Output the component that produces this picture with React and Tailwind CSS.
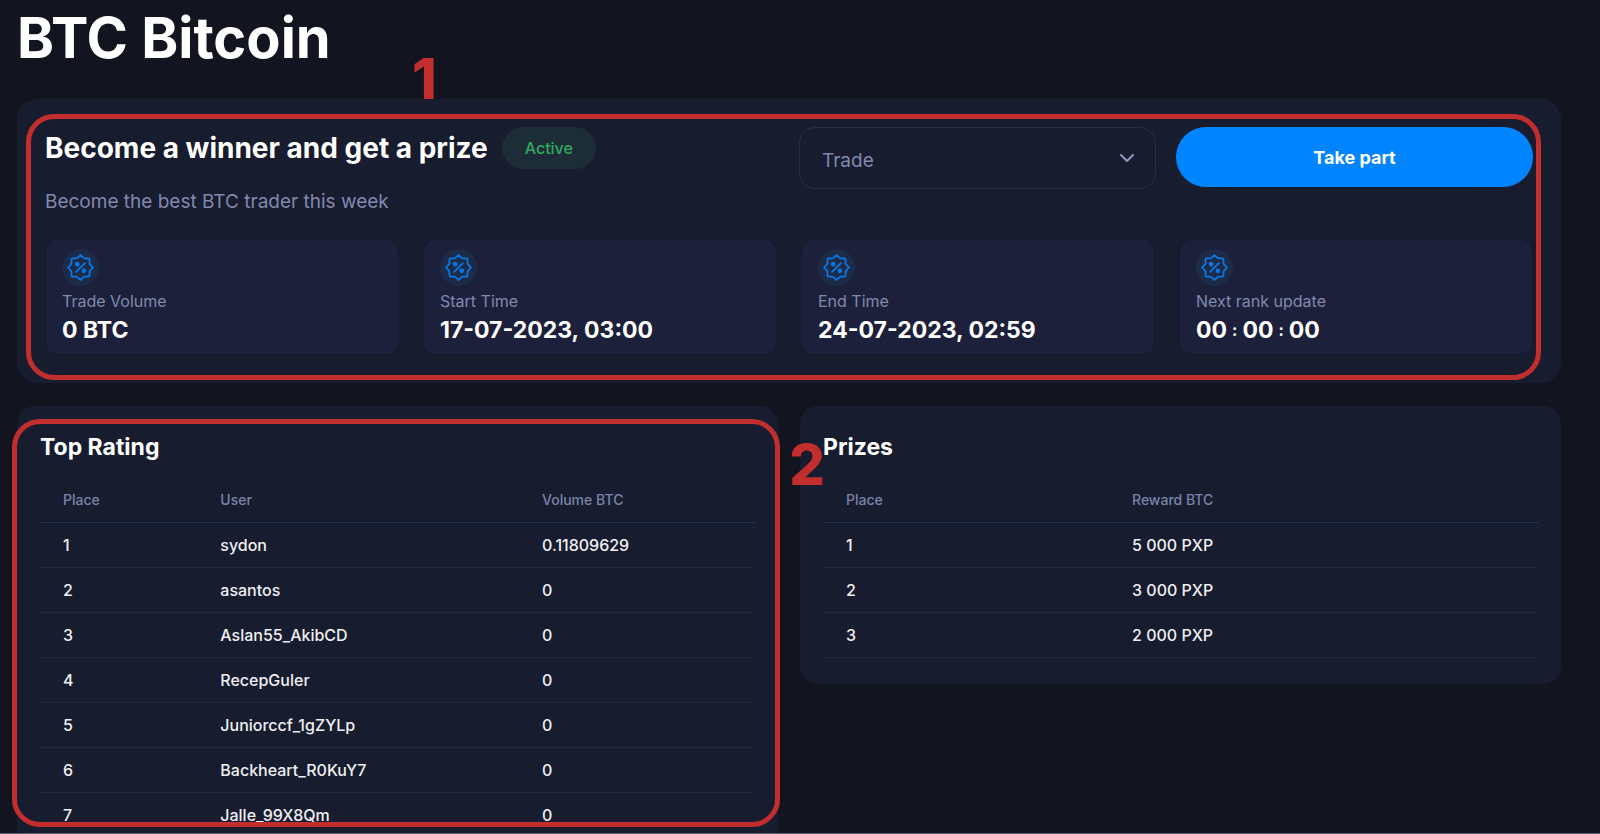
import { ChevronDown } from "lucide-react";

const stats = [
  { label: "Trade Volume", value: "0 BTC" },
  { label: "Start Time", value: "17-07-2023, 03:00" },
  { label: "End Time", value: "24-07-2023, 02:59" },
];

const rating = [
  { place: 1, user: "sydon", volume: "0.11809629" },
  { place: 2, user: "asantos", volume: "0" },
  { place: 3, user: "Aslan55_AkibCD", volume: "0" },
  { place: 4, user: "RecepGuler", volume: "0" },
  { place: 5, user: "Juniorccf_1gZYLp", volume: "0" },
  { place: 6, user: "Backheart_R0KuY7", volume: "0" },
  { place: 7, user: "Jalle_99X8Qm", volume: "0" },
];

const prizes = [
  { place: 1, reward: "5 000 PXP" },
  { place: 2, reward: "3 000 PXP" },
  { place: 3, reward: "2 000 PXP" },
];

function PercentBadge() {
  return (
    <div className="w-[37px] h-[37px] rounded-full bg-[#1c2c48] flex items-center justify-center">
      <svg
        width="27"
        height="27"
        viewBox="0 0 26 26"
        fill="none"
        stroke="#0a78e6"
        strokeWidth="1.7"
        strokeLinecap="round"
        strokeLinejoin="round"
        aria-hidden="true"
      >
        <path d="M13 1 L16 3.8 Q16.6 4.3 17.3 4.3 H20.7 Q21.7 4.3 21.7 5.3 V8.7 Q21.7 9.4 22.2 10 L25 13 L22.2 16 Q21.7 16.6 21.7 17.3 V20.7 Q21.7 21.7 20.7 21.7 H17.3 Q16.6 21.7 16 22.2 L13 25 L10 22.2 Q9.4 21.7 8.7 21.7 H5.3 Q4.3 21.7 4.3 20.7 V17.3 Q4.3 16.6 3.8 16 L1 13 L3.8 10 Q4.3 9.4 4.3 8.7 V5.3 Q4.3 4.3 5.3 4.3 H8.7 Q9.4 4.3 10 3.8 Z" />
        <path d="M17.2 8.8 L8.8 17.2" />
        <circle cx="9.8" cy="9.8" r="1.4" fill="#0a66c8" />
        <circle cx="16.2" cy="16.2" r="1.4" fill="#0a66c8" />
      </svg>
    </div>
  );
}

function StatCard({ label, children }) {
  return (
    <div className="rounded-xl border border-[#161929] bg-[#1c203a] px-4 pt-[9px] pb-[9px]">
      <PercentBadge />
      <div className="mt-px text-base leading-7 text-[#8189ad]">{label}</div>
      <div className="text-[23px] leading-[30px] font-bold text-white">{children}</div>
    </div>
  );
}

function HeadCell({ className = "", children }) {
  return (
    <th
      scope="col"
      className={`h-[46px] px-[23px] text-left text-sm font-medium text-[#7a83a9] border-b border-[#1f3150] ${className}`}
    >
      {children}
    </th>
  );
}

function Cell({ children }) {
  return (
    <td className="h-[45px] px-[23px] text-base font-medium text-[#eeeff3] border-b border-[#1b2740]">
      {children}
    </td>
  );
}

export default function App() {
  return (
    <main className="h-screen overflow-hidden flex flex-col border-b border-[#5a5c6b] bg-[#12141f] pl-[17px] pr-[39px] font-['Inter',sans-serif] text-white">
      <h1 className="pt-2 text-[56px] leading-[60px] font-bold shrink-0">BTC Bitcoin</h1>

      {/* Competition summary */}
      <section className="relative shrink-0 mt-[31px] rounded-[20px] bg-[#181c2f] px-7 pt-7 pb-7">
        <div className="grid grid-cols-4 gap-5">
          <div className="col-span-2">
            <div className="flex items-center gap-[14px]">
              <h2 className="text-[28px] leading-[42px] font-bold">Become a winner and get a prize</h2>
              <span className="rounded-full bg-[#1c2d37] px-[23px] leading-[42px] text-base font-medium text-[#34a860]">
                Active
              </span>
            </div>
            <p className="mt-[19px] text-[19px] leading-7 text-[#8189ad]">Become the best BTC trader this week</p>
          </div>

          <div className="relative h-[62px]">
            <select
              aria-label="Competition type"
              className="w-full h-full appearance-none rounded-2xl border border-[#272c49] bg-transparent pl-[22px] pr-12 pt-[6px] text-[19px] text-[#8189ad]"
            >
              <option>Trade</option>
            </select>
            <ChevronDown
              size={24}
              strokeWidth={2}
              className="absolute right-[17px] top-[19px] text-[#8f97bb] pointer-events-none"
            />
          </div>

          <button type="button" className="h-[60px] rounded-full bg-[#0084ff] text-[18px] font-bold text-white">
            Take part
          </button>
        </div>

        <div className="mt-[23px] grid grid-cols-4 gap-6">
          {stats.map((stat) => (
            <StatCard key={stat.label} label={stat.label}>
              {stat.value}
            </StatCard>
          ))}
          <StatCard label="Next rank update">
            <span className="flex items-center gap-[5px]">
              <span>00</span>
              <span className="text-base">:</span>
              <span>00</span>
              <span className="text-base">:</span>
              <span>00</span>
            </span>
          </StatCard>
        </div>

        {/* Callout 1 */}
        <div className="absolute left-[9px] right-5 top-[15px] bottom-[3px] rounded-[28px] border-[5px] border-[#c22e2e] pointer-events-none" />
        <span className="absolute left-[395px] top-[-48px] text-[56px] leading-[56px] font-extrabold text-[#c22e2e]">1</span>
      </section>

      <div className="mt-[23px] flex-1 min-h-0 grid grid-cols-2 gap-[22px]">
        <section className="relative min-h-0 rounded-t-[18px] bg-[#181c2f]">
          <div className="h-full overflow-hidden px-[23px] pt-[25px]">
            <h2 className="text-[23px] leading-8 font-bold">Top Rating</h2>
            <table className="mt-[14px] w-full table-fixed border-separate border-spacing-0">
              <thead>
                <tr>
                  <HeadCell className="w-[22%]">Place</HeadCell>
                  <HeadCell className="w-[45%]">User</HeadCell>
                  <HeadCell>Volume BTC</HeadCell>
                </tr>
              </thead>
              <tbody>
                {rating.map((row) => (
                  <tr key={row.place}>
                    <Cell>{row.place}</Cell>
                    <Cell>{row.user}</Cell>
                    <Cell>{row.volume}</Cell>
                  </tr>
                ))}
              </tbody>
            </table>
          </div>

          {/* Callout 2 */}
          <div className="absolute left-[-5px] right-[-2px] top-[13px] bottom-[6px] rounded-[28px] border-[5px] border-[#c22e2e] pointer-events-none" />
          <span className="absolute right-[-47px] top-[31px] z-10 text-[56px] leading-[56px] font-extrabold text-[#c22e2e]">2</span>
        </section>

        <section className="self-start rounded-[18px] bg-[#181c2f] px-[23px] pt-[25px] pb-[26px]">
          <h2 className="text-[23px] leading-8 font-bold">Prizes</h2>
          <table className="mt-[14px] w-full table-fixed border-separate border-spacing-0">
            <thead>
              <tr>
                <HeadCell className="w-[40%]">Place</HeadCell>
                <HeadCell>Reward BTC</HeadCell>
              </tr>
            </thead>
            <tbody>
              {prizes.map((row) => (
                <tr key={row.place}>
                  <Cell>{row.place}</Cell>
                  <Cell>{row.reward}</Cell>
                </tr>
              ))}
            </tbody>
          </table>
        </section>
      </div>
    </main>
  );
}
